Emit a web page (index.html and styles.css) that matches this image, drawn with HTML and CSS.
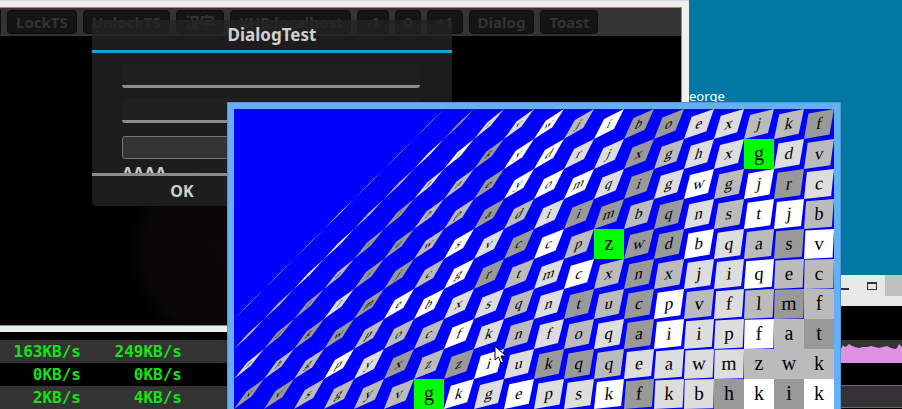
FILE: index.html
```html
<!DOCTYPE html>
<html lang="en">
<head>
    <meta charset="UTF-8">
    <meta name="viewport" content="width=device-width, initial-scale=1.0">
    <title>DialogTest</title>
    <link rel="stylesheet" href="styles.css">
</head>
<body>
    <div class="desktop-label">george</div>

    <div class="browser">
        <div class="app">
            <div class="toolbar">
                <button class="tool tool-cut"></button>
                <button class="tool">LockTS</button>
                <button class="tool">UnlockTS</button>
                <button class="tool">汉字</button>
                <button class="tool">XHR:localhost</button>
                <button class="tool">-1</button>
                <button class="tool">0</button>
                <button class="tool">+1</button>
                <button class="tool">Dialog</button>
                <button class="tool">Toast</button>
            </div>
            <div class="stage"></div>
        </div>
    </div>

    <div class="dialog">
        <div class="dialog-title">DialogTest</div>
        <div class="dialog-body">
            <div class="field"></div>
            <div class="field"></div>
            <div class="field-box"></div>
            <div class="dialog-text">AAAA</div>
        </div>
        <div class="dialog-footer">
            <div class="dialog-button">OK</div>
        </div>
    </div>

    <div class="netstat">
        <div class="net-row"><span>163KB/s</span><span>249KB/s</span></div>
        <div class="net-row"><span>0KB/s</span><span>0KB/s</span></div>
        <div class="net-row"><span>2KB/s</span><span>4KB/s</span></div>
    </div>

    <div class="monitor">
        <div class="monitor-title">
            <span class="win-min"></span>
            <span class="win-max"></span>
            <span class="win-close"></span>
        </div>
        <div class="monitor-gap"></div>
        <div class="monitor-row">
            <svg class="chart" viewBox="0 0 61 23" width="61" height="23">
                <polygon fill="#e092e2" points="0,23 0,9 2,5 4,7 6,6 8,4 11,6 14,7 18,8 22,7 26,7 30,6 34,7 38,8 42,7 46,6 50,8 54,9 56,8 58,4 60,6 61,7 61,23"/>
            </svg>
        </div>
        <div class="monitor-gap monitor-gap-small"></div>
        <div class="monitor-row monitor-row-lined"></div>
    </div>

    <div class="grid-window">
        <svg id="grid" width="600" height="300" viewBox="0 0 600 300"></svg>
    </div>

    <svg class="cursor" width="14" height="20" viewBox="0 0 14 20">
        <polygon fill="#fff" stroke="#000" points="1,1 1,15 4.5,12 7,18 9.5,17 7,11 12,11"/>
    </svg>

    <script src="grid.js"></script>
</body>
</html>
```

FILE: styles.css
```css
html, body {
    margin: 0;
    height: 409px;
    overflow: hidden;
}
body {
    position: relative;
    width: 902px;
    background-color: #0078a4;
    font-family: "Noto Sans", sans-serif;
}
.desktop-label {
    position: absolute;
    left: 681px;
    top: 87px;
    font-size: 13px;
    line-height: 18px;
    color: #fff;
}
.browser {
    position: absolute;
    left: 0;
    top: 0;
    width: 682px;
    height: 319px;
    padding: 6px 7px 6px 0;
    background-color: #efefef;
    border-top: 1px solid #d8d8d8;
}
.app {
    height: 100%;
    border: 1px solid #b8862d;
    border-left: none;
    box-sizing: border-box;
    display: flex;
    flex-direction: column;
}
.toolbar {
    display: flex;
    gap: 6px;
    align-items: flex-start;
    height: 28px;
    padding-top: 2px;
    box-sizing: border-box;
    background-color: #333;
}
.tool {
    height: 24px;
    padding: 0 8px;
    border: 1px solid #0d0d0d;
    border-radius: 4px;
    background-color: #141414;
    color: #333;
    font-family: "Noto Sans", "Noto Sans CJK SC", sans-serif;
    font-size: 15px;
    font-weight: 700;
    line-height: 20px;
}
.tool-cut {
    width: 1px;
    padding: 0;
    border-left: none;
    border-radius: 0 4px 4px 0;
}
.stage {
    flex: 1;
    background: radial-gradient(circle at 225px 215px, #0a0908 0, #080706 80px, #000 100px);
}
.dialog {
    position: absolute;
    left: 92px;
    top: 20px;
    width: 360px;
    height: 186px;
    border-radius: 0 0 4px 4px;
    background-color: rgba(36, 36, 36, 0.78);
    display: flex;
    flex-direction: column;
}
.dialog-title {
    height: 30px;
    border-bottom: 3px solid #00a8d2;
    color: #d0d0d0;
    font-size: 17px;
    font-weight: 700;
    line-height: 30px;
    text-align: center;
}
.dialog-body {
    flex: 1;
    min-height: 0;
    overflow: hidden;
    padding: 10px 32px 0 30px;
}
.field {
    height: 22px;
    margin-bottom: 10px;
    border-bottom: 3px solid #8c8c8c;
    border-radius: 3px;
    background-color: #1f1f1f;
}
.field-box {
    height: 21px;
    margin-top: 13px;
    border: 1px solid #777;
    border-radius: 3px;
    background-color: #333;
}
.dialog-text {
    margin-top: 3px;
    color: #ccc;
    font-size: 16px;
    font-weight: 700;
    line-height: 22px;
}
.dialog-footer {
    height: 30px;
    border-top: 3px solid #8c8c8c;
}
.dialog-button {
    width: 180px;
    color: #d0d0d0;
    font-size: 16px;
    font-weight: 700;
    line-height: 30px;
    text-align: center;
}
.netstat {
    position: absolute;
    left: 0;
    top: 332px;
    width: 228px;
    height: 77px;
    padding-top: 8px;
    box-sizing: border-box;
    background-color: #000;
}
.net-row {
    display: grid;
    grid-template-columns: 81px 101px;
    height: 23px;
    color: #12e612;
    font-family: "DejaVu Sans Mono", monospace;
    font-size: 16px;
    font-weight: 700;
    line-height: 23px;
    text-align: right;
}
.net-row:nth-child(odd) {
    background-color: #333;
}
.monitor {
    position: absolute;
    left: 800px;
    top: 275px;
    width: 102px;
    height: 134px;
    background-color: #000;
}
.monitor-title {
    position: relative;
    height: 31px;
    background-color: #e8e8e8;
}
.win-min {
    position: absolute;
    left: 39px;
    top: 13px;
    width: 10px;
    height: 2px;
    background-color: #333;
}
.win-max {
    position: absolute;
    left: 67px;
    top: 7px;
    width: 8px;
    height: 5px;
    border: 1px solid #333;
    border-top-width: 2px;
}
.win-close {
    position: absolute;
    right: 0;
    top: 0;
    width: 17px;
    height: 21px;
    background-color: #c0c0c0;
}
.monitor-gap {
    height: 34px;
}
.monitor-gap-small {
    height: 22px;
}
.monitor-row {
    height: 23px;
    background-color: #333;
}
.monitor-row-lined {
    height: 21px;
    border-top: 1px solid #a040b0;
    border-bottom: 1px solid #a040b0;
}
.chart {
    display: block;
    margin-left: 41px;
}
.grid-window {
    position: absolute;
    left: 228px;
    top: 103px;
    width: 600px;
    height: 300px;
    border-style: solid;
    border-color: #64b0f8;
    border-width: 6px 6px 0 6px;
    outline: 1px solid #4f96d6;
    background-color: #00f;
}
#grid {
    display: block;
}
.cell-text {
    font-family: "Liberation Serif", serif;
    font-size: 20px;
    text-anchor: middle;
    fill: #000;
}
.cursor {
    position: absolute;
    left: 494px;
    top: 345px;
}
```

FILE: grid.js
```js
// letters and shades of the warped grid, one string per row
// shades: w white, l light, m mid, d dark, G green, . not drawn
const letters = [
    '......anrvwjiboexjkf',
    '.....estkydrjxghxgdv',
    '....auhneyomqigwgjrc',
    '...xclbpadiimbqnstjb',
    '..ojruwsvccpzwdbqasv',
    '.heaijcgrtmcxnxjiqec',
    'zbflmebxsqntucpvflmf',
    'rdkwpocfknfoqaiipfat',
    'nhgpyxzziukqqeawmzwk',
    'xvsgyvgkgepskfkbhkik'
];
const shades = [
    '......ddllwmwddllmmd',
    '.....dwwdwwlldmllGlm',
    '....dmlmdwwwldlwmwdl',
    '...wmdmmdmlddmdlmwwm',
    '..dwddmwldwmGddwlmdw',
    '.dwmddmwdmlwmdmllwmm',
    'dmdldwwllmldmdwmlmdm',
    'mdddmmmwlmlmldwllwmd',
    'lmmwldmdwlddmllllmmm',
    'ddmmmmGwlwllwdlldwdw'
];
const colors = { w: '#fff', l: '#ddd', m: '#bbb', d: '#999', G: '#0f0' };

const svg = document.getElementById('grid');
const NS = 'http://www.w3.org/2000/svg';
const CELL = 30;

// how far a cell collapses onto its anti-diagonal
function squash(x, y) {
    const t = (x + y - 180) / 570;
    if (t >= 1) return 0;
    return Math.min(0.98, Math.pow(1 - Math.max(t, 0), 1.05));
}

function drawCell(col, row) {
    const shade = shades[row][col];
    if (shade === '.') return;
    const x = col * CELL;
    const y = row * CELL;
    const s = shade === 'G' ? 0 : squash(x, y);
    const d = 15 * s;

    const poly = document.createElementNS(NS, 'polygon');
    poly.setAttribute('fill', colors[shade]);
    poly.setAttribute('points', [
        (x + d) + ',' + (y + d),
        (x + CELL) + ',' + y,
        (x + CELL - d) + ',' + (y + CELL - d),
        x + ',' + (y + CELL)
    ].join(' '));
    svg.appendChild(poly);

    const text = document.createElementNS(NS, 'text');
    const a = 1 - s / 2;
    const b = -s / 2;
    text.setAttribute('class', 'cell-text');
    text.setAttribute('y', 6);
    text.setAttribute('transform', `matrix(${a} ${b} ${b} ${a} ${x + 15} ${y + 15})`);
    text.textContent = letters[row][col];
    svg.appendChild(text);
}

for (let row = 0; row < letters.length; row++) {
    for (let col = 0; col < 20; col++) {
        drawCell(col, row);
    }
}
```
